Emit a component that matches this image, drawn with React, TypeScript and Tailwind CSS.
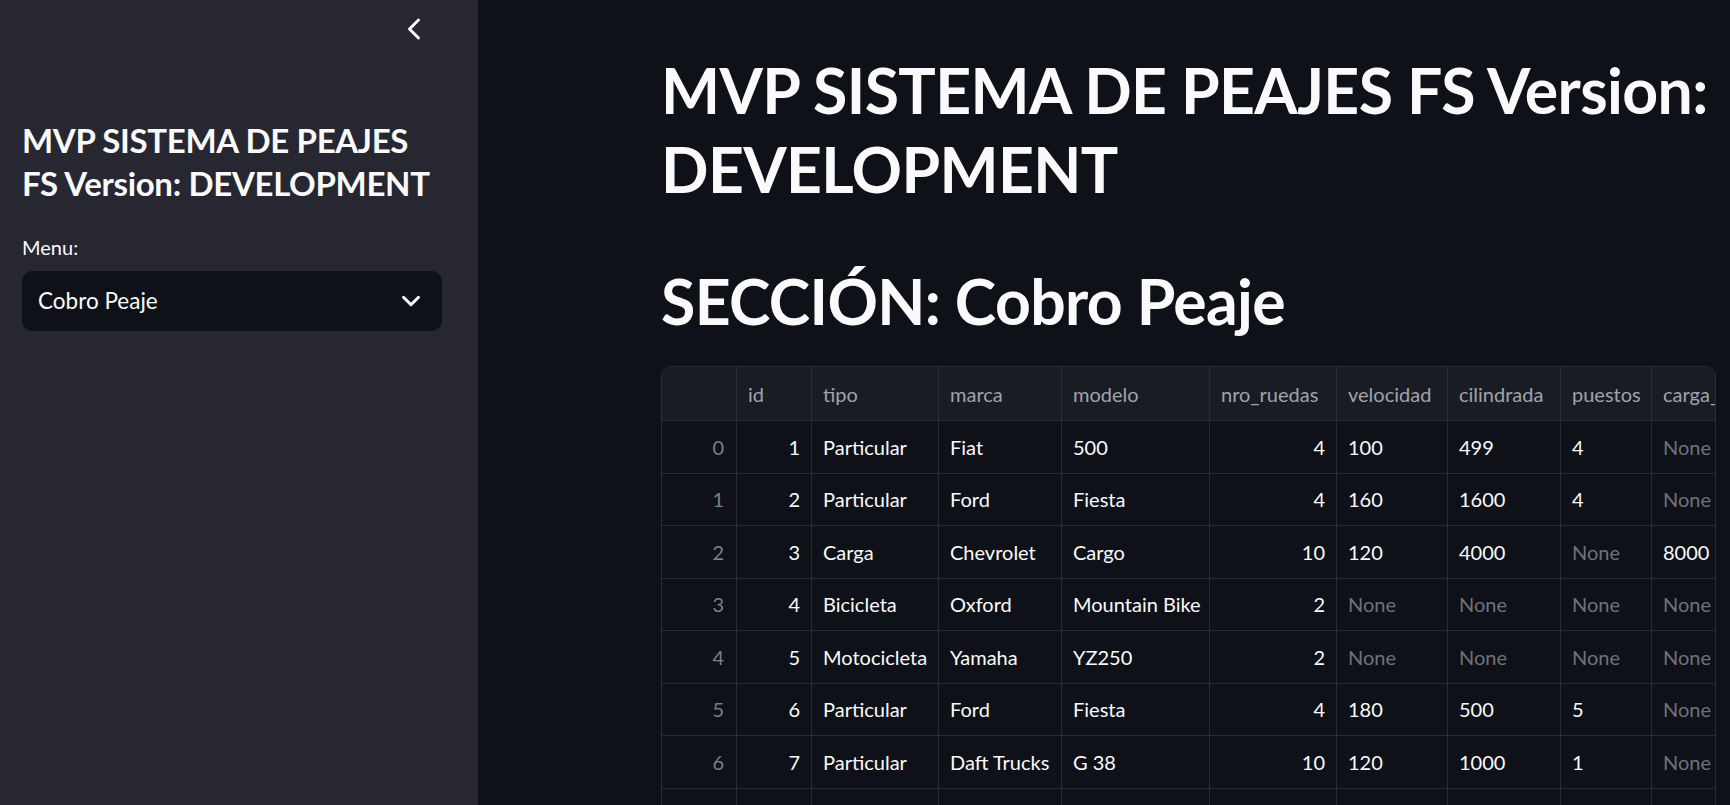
import { ChevronDown, ChevronLeft } from "lucide-react";

const font = { fontFamily: "Lato, 'Noto Sans', sans-serif" };

const columns = [
  { key: "id", w: "w-[75px]", right: true },
  { key: "tipo", w: "w-[127px]" },
  { key: "marca", w: "w-[123px]" },
  { key: "modelo", w: "w-[148px]" },
  { key: "nro_ruedas", w: "w-[127px]", right: true },
  { key: "velocidad", w: "w-[111px]" },
  { key: "cilindrada", w: "w-[113px]" },
  { key: "puestos", w: "w-[91px]" },
  { key: "carga_max", w: "w-[140px]" },
];

const rows = [
  ["1", "Particular", "Fiat", "500", "4", "100", "499", "4", "None"],
  ["2", "Particular", "Ford", "Fiesta", "4", "160", "1600", "4", "None"],
  ["3", "Carga", "Chevrolet", "Cargo", "10", "120", "4000", "None", "8000"],
  ["4", "Bicicleta", "Oxford", "Mountain Bike", "2", "None", "None", "None", "None"],
  ["5", "Motocicleta", "Yamaha", "YZ250", "2", "None", "None", "None", "None"],
  ["6", "Particular", "Ford", "Fiesta", "4", "180", "500", "5", "None"],
  ["7", "Particular", "Daft Trucks", "G 38", "10", "120", "1000", "1", "None"],
  ["8", "Carga", "Ford", "F-350", "6", "110", "3500", "None", "5000"],
];

const Sidebar = () => (
  <aside className="w-[478px] shrink-0 h-full bg-[#262730] px-[22px] flex flex-col">
    <div className="flex justify-end pr-[24px] pt-[11px]">
      <ChevronLeft size={36} strokeWidth={2} className="text-[#fafafa]" />
    </div>
    <h2 className="mt-[72px] w-[420px] text-[33px] leading-[43px] tracking-[-0.01em] font-bold text-[#fafafa]">
      MVP SISTEMA DE PEAJES FS Version: DEVELOPMENT
    </h2>
    <label className="mt-[28px] text-[20px] leading-[28px] text-[#fafafa]">Menu:</label>
    <div className="mt-[10px] h-[60px] w-[420px] rounded-[10px] bg-[#0e1117] flex items-center justify-between pl-[16px] pr-[16px]">
      <span className="text-[22.5px] text-[#fafafa]">Cobro Peaje</span>
      <ChevronDown size={30} strokeWidth={2.4} className="text-[#fafafa]" />
    </div>
  </aside>
);

const DataTable = () => (
  <div className="mt-[26px] w-[1055px] overflow-hidden rounded-[10px] border border-[#2a2c34] text-[20px]">
    <div className="flex w-max h-[54px] bg-[#1a1c24] border-b border-[#2a2c34] text-[#a0a2ac]">
      <div className="w-[75px] shrink-0 border-r border-[#2a2c34]" />
      {columns.map((c) => (
        <div key={c.key} className={`${c.w} shrink-0 border-r border-[#2a2c34] px-[11px] flex items-center whitespace-nowrap`}>
          {c.key}
        </div>
      ))}
    </div>
    {rows.map((r, i) => (
      <div key={i} className="flex w-max h-[52.5px] border-b border-[#2a2c34] text-[#fafafa]">
        <div className="w-[75px] shrink-0 border-r border-[#2a2c34] px-[12px] flex items-center justify-end text-[#7d7f88]">
          {i}
        </div>
        {r.map((v, j) => (
          <div
            key={j}
            className={`${columns[j].w} shrink-0 border-r border-[#2a2c34] px-[11px] flex items-center whitespace-nowrap overflow-hidden ${
              columns[j].right ? "justify-end" : ""
            } ${v === "None" ? "text-[#6f717a]" : ""}`}
          >
            {v}
          </div>
        ))}
      </div>
    ))}
  </div>
);

export default function App() {
  return (
    <div className="flex h-screen w-full overflow-hidden bg-[#0e1117]" style={font}>
      <Sidebar />
      <main className="flex-1 pl-[183px] pt-[50px]">
        <h1 className="w-[1060px] text-[62.5px] leading-[79px] tracking-[-0.01em] font-bold text-[#fafafa]">
          MVP SISTEMA DE PEAJES FS Version: DEVELOPMENT
        </h1>
        <h1 className="mt-[53px] text-[62.5px] leading-[79px] tracking-[-0.01em] font-bold text-[#fafafa]">
          SECCIÓN: Cobro Peaje
        </h1>
        <DataTable />
      </main>
    </div>
  );
}
